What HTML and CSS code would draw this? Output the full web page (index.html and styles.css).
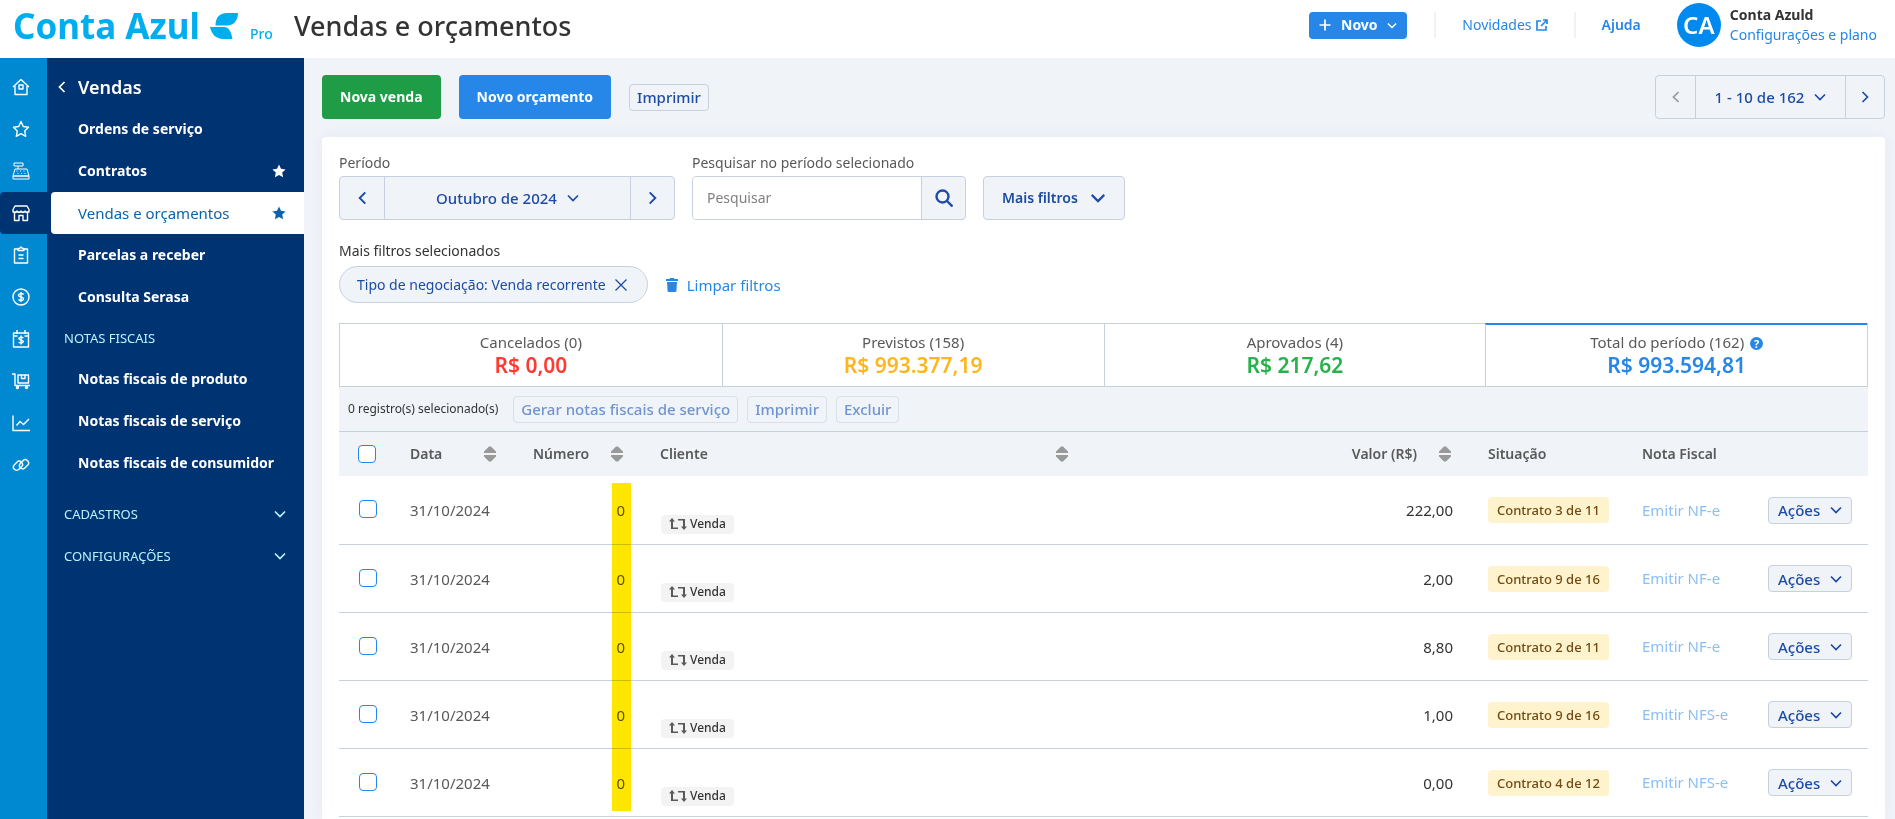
FILE: index.html
```html
<!DOCTYPE html>
<html lang="pt-BR">
<head>
  <meta charset="UTF-8" />
  <meta name="viewport" content="width=device-width, initial-scale=1.0"/>
  <title>Vendas e orçamentos | Conta Azul</title>
  <link rel="stylesheet" href="styles.css">
</head>
<body>

  <!-- Shared icons -->
  <svg class="sprite" aria-hidden="true">
    <symbol id="chevron-down" viewBox="0 0 12 8"><path d="M1 1.500l5 5 5-5"/></symbol>
    <symbol id="chevron-left" viewBox="0 0 8 12"><path d="M6.500 1l-5 5 5 5"/></symbol>
    <symbol id="chevron-right" viewBox="0 0 8 12"><path d="M1.500 1l5 5-5 5"/></symbol>
    <symbol id="sort" viewBox="0 0 12 16"><path d="M5 .5h2l5 5V7H0V5.500zM0 9h12v1.500l-5 5H5l-5-5z"/></symbol>
    <symbol id="star" viewBox="0 0 14 14"><path d="M7 .5l2 4.300 4.600.6-3.400 3.200.9 4.700L7 11l-4.100 2.300.9-4.700L.4 5.400 5 4.800z"/></symbol>
    <symbol id="repeat" viewBox="0 0 18 12"><path d="M3 0l3 3.500H4v6h5V11H2V3.500H0zM15 12l-3-3.500h2v-6H9V1h7v7.500h2z"/></symbol>
  </svg>

  <header class="header">
    <a href="#" class="logo">
      <span class="logo__name">Conta Azul</span>
      <svg class="logo__mark" viewBox="0 0 28 26"><path d="M5.500 12.500C5.500 5 9 0 17 0h11c0 7-4 12.500-11 12.500zM0 14h14c4 0 7 3 8.500 12H13C6 26 1.500 21 0 14z"/></svg>
      <span class="logo__plan">Pro</span>
    </a>
    <h1 class="header__title">Vendas e orçamentos</h1>
    <div class="header__actions">
      <button class="btn-new">
        <svg class="icon" width="12" height="12" viewBox="0 0 12 12"><path d="M6 .5v11M.5 6h11"/></svg>
        <span>Novo</span>
        <svg class="icon" width="10" height="7"><use href="#chevron-down"/></svg>
      </button>
      <a href="#" class="header__link">Novidades
        <svg class="icon" width="12" height="12" viewBox="0 0 12 12"><path d="M5 2H1v9h9V7M7 1h4v4M11 1L5 7"/></svg>
      </a>
      <a href="#" class="header__link header__link--help">Ajuda</a>
      <div class="account">
        <span class="account__avatar">CA</span>
        <div class="account__text">
          <strong>Conta Azuld</strong>
          <a href="#">Configurações e plano</a>
        </div>
      </div>
    </div>
  </header>

  <div class="layout">
    <nav class="rail" aria-label="Módulos">
      <a href="#" aria-label="Início"><svg viewBox="0 0 18 18"><path d="M1 9l8-7.500L17 9M3 8v8.500h12V8M7 7h4v4H7z"/></svg></a>
      <a href="#" aria-label="Favoritos"><svg viewBox="0 0 18 18"><path d="M9 1.500l2.300 5 5.200.7-3.800 3.700 1 5.400L9 13.700l-4.700 2.600 1-5.400L1.500 7.200l5.200-.7z"/></svg></a>
      <a href="#" aria-label="Caixa"><svg class="thin" viewBox="0 0 18 18"><path d="M2 1h9v3H2zM6 4v3M3 7h12l2 7H1zM1 14h16v3H1zM4.500 9h1M8 9h1M11.500 9h1M5.500 11.500h1M9 11.500h1M12.500 11.500h1"/></svg></a>
      <a href="#" class="active" aria-label="Vendas"><svg viewBox="0 0 18 18"><path d="M3 2h12l2 3.500V8H1V5.500zM1 7c1 2 3 2 4 0 1 2 3 2 4 0 1 2 3 2 4 0 1 2 3 2 4 0M2.500 9v7.500H7v-5h4v5h4.500V9"/></svg></a>
      <a href="#" aria-label="Cadastros"><svg viewBox="0 0 18 18"><path d="M6 3H2.500v14h13V3H12M6 4.500h6V2.500h-1.500L9 1 7.500 2.500H6zM6.500 9h5M6.500 12.500h5"/></svg></a>
      <a href="#" aria-label="Financeiro"><svg viewBox="0 0 18 18"><circle cx="9" cy="9" r="8"/><path d="M11.500 6.500c-1-1.500-5-1.200-5 .8 0 2.200 5 1.200 5 3.500 0 2-4 2.200-5 .5M9 4v10"/></svg></a>
      <a href="#" aria-label="Agenda"><svg viewBox="0 0 18 18"><path d="M1.500 3h15v14h-15zM1.500 6h4M12.500 6h4M5 0v4M13 0v4M11.300 8c-1-1.200-4.500-1-4.500.6 0 1.900 4.500 1 4.500 3 0 1.700-3.700 1.900-4.600.4M9 5.500v9"/></svg></a>
      <a href="#" aria-label="Estoque"><svg viewBox="0 0 18 18"><path d="M0 2h3v11.500h15M6 3h10.500v8H6zM9.500 3v3.500H13V3"/><circle cx="5.500" cy="15.500" r="1"/><circle cx="14.500" cy="15.500" r="1"/></svg></a>
      <a href="#" aria-label="Relatórios"><svg viewBox="0 0 18 18"><path d="M1 1.500v15h17M4.500 11.500L8 7.500l3.500 3L17 5"/></svg></a>
      <a href="#" aria-label="Integrações"><svg viewBox="0 0 18 18"><rect x="1" y="6.500" width="10" height="6.500" rx="3.200" transform="rotate(-45 6 9.800)"/><rect x="7" y="5" width="10" height="6.500" rx="3.200" transform="rotate(-45 12 8.200)"/></svg></a>
    </nav>

    <nav class="sidebar" aria-label="Vendas">
      <a href="#" class="sidebar__title"><svg class="icon" width="8" height="12"><use href="#chevron-left"/></svg>Vendas</a>
      <a href="#" class="sidebar__item">Ordens de serviço</a>
      <a href="#" class="sidebar__item">Contratos <svg class="star"><use href="#star"/></svg></a>
      <a href="#" class="sidebar__item sidebar__item--active">Vendas e orçamentos <svg class="star"><use href="#star"/></svg></a>
      <a href="#" class="sidebar__item">Parcelas a receber</a>
      <a href="#" class="sidebar__item">Consulta Serasa</a>
      <h2 class="sidebar__section">NOTAS FISCAIS</h2>
      <a href="#" class="sidebar__item">Notas fiscais de produto</a>
      <a href="#" class="sidebar__item">Notas fiscais de serviço</a>
      <a href="#" class="sidebar__item">Notas fiscais de consumidor</a>
      <div class="sidebar__groups">
        <button class="sidebar__section">CADASTROS <svg class="icon" width="12" height="8"><use href="#chevron-down"/></svg></button>
        <button class="sidebar__section">CONFIGURAÇÕES <svg class="icon" width="12" height="8"><use href="#chevron-down"/></svg></button>
      </div>
    </nav>

    <main class="main">
      <div class="toolbar">
        <button class="btn btn--green">Nova venda</button>
        <button class="btn btn--blue">Novo orçamento</button>
        <button class="btn-small">Imprimir</button>
        <div class="group pagination">
          <button disabled aria-label="Página anterior"><svg class="icon" width="8" height="12"><use href="#chevron-left"/></svg></button>
          <button class="group__label">1 - 10 de 162 <svg class="icon" width="12" height="8"><use href="#chevron-down"/></svg></button>
          <button aria-label="Próxima página"><svg class="icon" width="8" height="12"><use href="#chevron-right"/></svg></button>
        </div>
      </div>

      <section class="card">
        <div class="filters">
          <div class="field">
            <span class="field__label">Período</span>
            <div class="group period">
              <button aria-label="Mês anterior"><svg class="icon" width="9" height="14"><use href="#chevron-left"/></svg></button>
              <button class="group__label">Outubro de 2024 <svg class="icon" width="12" height="8"><use href="#chevron-down"/></svg></button>
              <button aria-label="Próximo mês"><svg class="icon" width="9" height="14"><use href="#chevron-right"/></svg></button>
            </div>
          </div>
          <div class="field">
            <label class="field__label" for="search">Pesquisar no período selecionado</label>
            <div class="group search">
              <input type="text" id="search" placeholder="Pesquisar">
              <button aria-label="Pesquisar"><svg class="icon icon--bold" width="18" height="18" viewBox="0 0 18 18"><circle cx="7.500" cy="7.500" r="6"/><path d="M12 12l5.500 5.500"/></svg></button>
            </div>
          </div>
          <button class="btn btn--light">Mais filtros <svg class="icon" width="16" height="10"><use href="#chevron-down"/></svg></button>
        </div>

        <p class="selected-label">Mais filtros selecionados</p>
        <div class="selected">
          <button class="chip">Tipo de negociação: Venda recorrente
            <svg class="icon" width="12" height="12" viewBox="0 0 12 12"><path d="M.5.5l11 11M11.500.5l-11 11"/></svg>
          </button>
          <a href="#" class="clear">
            <svg width="12" height="14" viewBox="0 0 12 14"><path d="M0 1h3.500L4.200 0h3.600l.7 1H12v2H0zM1 4h10l-.6 9a1 1 0 0 1-1 1H2.600a1 1 0 0 1-1-1z"/></svg>
            Limpar filtros
          </a>
        </div>

        <div class="totals">
          <button class="total total--red"><span>Cancelados (0)</span><strong>R$ 0,00</strong></button>
          <button class="total total--yellow"><span>Previstos (158)</span><strong>R$ 993.377,19</strong></button>
          <button class="total total--green"><span>Aprovados (4)</span><strong>R$ 217,62</strong></button>
          <button class="total total--blue active"><span>Total do período (162) <i class="help">?</i></span><strong>R$ 993.594,81</strong></button>
        </div>

        <div class="bulk">
          <span>0 registro(s) selecionado(s)</span>
          <button class="btn-small" disabled>Gerar notas fiscais de serviço</button>
          <button class="btn-small" disabled>Imprimir</button>
          <button class="btn-small" disabled>Excluir</button>
        </div>

        <div class="table-wrap">
          <table class="sales">
            <colgroup>
              <col class="col-check">
              <col class="col-date">
              <col class="col-number">
              <col>
              <col class="col-value">
              <col class="col-status">
              <col class="col-invoice">
              <col class="col-actions">
            </colgroup>
            <thead>
              <tr>
                <th><input type="checkbox" aria-label="Selecionar todos"></th>
                <th><div class="sortable">Data <svg><use href="#sort"/></svg></div></th>
                <th><div class="sortable">Número <svg><use href="#sort"/></svg></div></th>
                <th><div class="sortable">Cliente <svg><use href="#sort"/></svg></div></th>
                <th><div class="sortable sortable--end">Valor (R$) <svg><use href="#sort"/></svg></div></th>
                <th>Situação</th>
                <th>Nota Fiscal</th>
                <th></th>
              </tr>
            </thead>
            <tbody>
              <tr>
                <td class="check"><input type="checkbox" aria-label="Selecionar venda"></td>
                <td class="date">31/10/2024</td>
                <td class="number">0</td>
                <td class="client"><span class="tag"><svg><use href="#repeat"/></svg>Venda</span></td>
                <td class="value">222,00</td>
                <td><span class="status">Contrato 3 de 11</span></td>
                <td><a href="#" class="invoice">Emitir NF-e</a></td>
                <td><button class="btn-small actions">Ações <svg class="icon" width="12" height="8"><use href="#chevron-down"/></svg></button></td>
              </tr>
              <tr>
                <td class="check"><input type="checkbox" aria-label="Selecionar venda"></td>
                <td class="date">31/10/2024</td>
                <td class="number">0</td>
                <td class="client"><span class="tag"><svg><use href="#repeat"/></svg>Venda</span></td>
                <td class="value">2,00</td>
                <td><span class="status">Contrato 9 de 16</span></td>
                <td><a href="#" class="invoice">Emitir NF-e</a></td>
                <td><button class="btn-small actions">Ações <svg class="icon" width="12" height="8"><use href="#chevron-down"/></svg></button></td>
              </tr>
              <tr>
                <td class="check"><input type="checkbox" aria-label="Selecionar venda"></td>
                <td class="date">31/10/2024</td>
                <td class="number">0</td>
                <td class="client"><span class="tag"><svg><use href="#repeat"/></svg>Venda</span></td>
                <td class="value">8,80</td>
                <td><span class="status">Contrato 2 de 11</span></td>
                <td><a href="#" class="invoice">Emitir NF-e</a></td>
                <td><button class="btn-small actions">Ações <svg class="icon" width="12" height="8"><use href="#chevron-down"/></svg></button></td>
              </tr>
              <tr>
                <td class="check"><input type="checkbox" aria-label="Selecionar venda"></td>
                <td class="date">31/10/2024</td>
                <td class="number">0</td>
                <td class="client"><span class="tag"><svg><use href="#repeat"/></svg>Venda</span></td>
                <td class="value">1,00</td>
                <td><span class="status">Contrato 9 de 16</span></td>
                <td><a href="#" class="invoice">Emitir NFS-e</a></td>
                <td><button class="btn-small actions">Ações <svg class="icon" width="12" height="8"><use href="#chevron-down"/></svg></button></td>
              </tr>
              <tr>
                <td class="check"><input type="checkbox" aria-label="Selecionar venda"></td>
                <td class="date">31/10/2024</td>
                <td class="number">0</td>
                <td class="client"><span class="tag"><svg><use href="#repeat"/></svg>Venda</span></td>
                <td class="value">0,00</td>
                <td><span class="status">Contrato 4 de 12</span></td>
                <td><a href="#" class="invoice">Emitir NFS-e</a></td>
                <td><button class="btn-small actions">Ações <svg class="icon" width="12" height="8"><use href="#chevron-down"/></svg></button></td>
              </tr>
            </tbody>
          </table>
          <!-- Marker over the number column -->
          <div class="marker"></div>
        </div>
      </section>
    </main>
  </div>

</body>
</html>
```

FILE: styles.css
```css
:root {
  --cyan: #00aeef;
  --rail: #0089d1;
  --navy: #003372;
  --blue: #2687e9;
  --blue-dark: #1c4ca3;
  --green: #1e9c46;
  --bg: #f0f3f8;
  --border: #c7d1dd;
  --text: #333;
  --text-soft: #595959;
}

* {
  box-sizing: border-box;
}

body {
  font-family: "Noto Sans", "Open Sans", sans-serif;
  font-size: 14px;
  line-height: 20px;
  color: var(--text);
  background-color: var(--bg);
  margin: 0;
  min-height: 100vh;
  display: flex;
  flex-direction: column;
}

a {
  color: var(--blue);
  text-decoration: none;
}

button, input {
  font: inherit;
  margin: 0;
}

button {
  cursor: pointer;
  white-space: nowrap;
}

.sprite {
  position: absolute;
  width: 0;
  height: 0;
}

.icon {
  fill: none;
  stroke: currentColor;
  stroke-width: 1.7;
  flex: none;
}

.icon--bold {
  stroke-width: 2.4;
}

/* Header */
.header {
  display: flex;
  align-items: center;
  height: 58px;
  padding: 0 18px 6px 13px;
  background-color: #fff;
}

.logo {
  display: flex;
  align-items: center;
  width: 281px;
  color: var(--cyan);
}

.logo__name {
  font-size: 35px;
  font-weight: 700;
  line-height: 52px;
  white-space: nowrap;
}

.logo__mark {
  width: 28px;
  height: 26px;
  margin-left: 10px;
  fill: var(--cyan);
}

.logo__plan {
  margin: 15px 0 0 12px;
  font-weight: 500;
}

.header__title {
  margin: 0;
  font-size: 27px;
  font-weight: 500;
  line-height: 52px;
}

.header__actions {
  display: flex;
  align-items: center;
  align-self: flex-start;
  margin-left: auto;
  height: 50px;
}

.btn-new {
  display: flex;
  align-items: center;
  justify-content: space-between;
  width: 98px;
  height: 27px;
  margin-right: 27px;
  padding: 0 10px;
  border: none;
  border-radius: 4px;
  background-color: var(--blue);
  color: #fff;
  font-weight: 700;
}

.header__link {
  display: flex;
  align-items: center;
  gap: 4px;
  height: 26px;
  padding: 0 26px;
  border-left: 2px solid #eff2f7;
}

.header__link--help {
  padding-right: 36px;
  font-weight: 600;
}

.account {
  display: flex;
  align-items: center;
  gap: 9px;
}

.account__avatar {
  width: 44px;
  height: 44px;
  border-radius: 50%;
  background-color: #0089ef;
  color: #fff;
  font-size: 24px;
  font-weight: 600;
  line-height: 44px;
  text-align: center;
}

.account__text {
  display: flex;
  flex-direction: column;
}

/* Navigation */
.layout {
  display: flex;
  flex: 1;
}

.rail {
  width: 47px;
  flex: none;
  padding-top: 8px;
  background-color: var(--rail);
}

.rail a {
  display: flex;
  align-items: center;
  height: 42px;
  padding-left: 12px;
}

.rail .active {
  background-color: var(--navy);
  border-radius: 4px 0 0 4px;
}

.rail svg {
  width: 18px;
  height: 18px;
  fill: none;
  stroke: #fff;
  stroke-width: 1.4;
  stroke-linejoin: round;
}

.rail .thin {
  stroke-width: 1;
}

.sidebar {
  width: 257px;
  flex: none;
  padding: 8px 0 0 4px;
  background-color: var(--navy);
}

.sidebar__title,
.sidebar__item,
.sidebar__section {
  display: flex;
  align-items: center;
  height: 42px;
  color: #fff;
}

.sidebar__title {
  gap: 12px;
  padding-left: 7px;
  font-size: 18px;
  font-weight: 600;
}

.sidebar__item {
  justify-content: space-between;
  padding: 0 18px 0 27px;
  font-weight: 700;
}

.sidebar__item--active {
  border-radius: 4px 0 0 4px;
  background-color: #fff;
  color: #0b63ae;
  font-size: 15px;
  font-weight: 400;
}

.star {
  width: 14px;
  height: 14px;
  fill: currentColor;
}

.sidebar__section {
  justify-content: space-between;
  width: 100%;
  height: 40px;
  margin: 0;
  padding: 0 18px 0 13px;
  border: none;
  background: none;
  color: #b8f3ff;
  font-size: 13px;
  font-weight: 400;
}

.sidebar__groups {
  display: grid;
  gap: 2px;
  margin-top: 10px;
}

/* Buttons */
.main {
  display: flex;
  flex-direction: column;
  flex: 1;
  min-width: 0;
  padding: 17px 10px 0 18px;
}

.toolbar {
  display: flex;
  align-items: center;
  gap: 18px;
  margin-bottom: 18px;
}

.btn {
  display: flex;
  align-items: center;
  gap: 12px;
  height: 44px;
  padding: 0 18px;
  border: none;
  border-radius: 4px;
  color: #fff;
  font-weight: 700;
}

.btn--green {
  background-color: var(--green);
}

.btn--blue {
  background-color: var(--blue);
}

.btn--light {
  border: 1px solid var(--border);
  background-color: var(--bg);
  color: var(--blue-dark);
  font-weight: 600;
}

.btn-small {
  height: 27px;
  padding: 0 7px;
  border: 1px solid var(--border);
  border-radius: 4px;
  background-color: var(--bg);
  color: var(--blue-dark);
  font-size: 15px;
  font-weight: 500;
}

.btn-small:disabled {
  border-color: #dae0e8;
  color: #6f94cf;
}

.group {
  display: flex;
  height: 44px;
  border: 1px solid var(--border);
  border-radius: 4px;
  background-color: var(--bg);
  overflow: hidden;
}

.group button {
  display: flex;
  align-items: center;
  justify-content: center;
  width: 44px;
  padding: 0;
  border: none;
  border-left: 1px solid var(--border);
  background: none;
  color: var(--blue-dark);
}

.group > :first-child {
  border-left: none;
}

.group .group__label {
  flex: 1;
  gap: 10px;
  font-size: 15px;
  font-weight: 500;
}

.group button:disabled {
  color: #999;
}

.pagination {
  width: 230px;
  margin-left: auto;
}

.pagination button {
  width: 39px;
}

/* Card */
.card {
  flex: 1;
  padding: 16px 17px 0;
  border-radius: 4px 4px 0 0;
  background-color: #fff;
  box-shadow: 0 0 16px rgba(28, 76, 163, 0.05);
}

.filters {
  display: flex;
  align-items: flex-end;
  gap: 17px;
}

.field__label {
  display: block;
  margin-bottom: 3px;
  color: var(--text-soft);
}

.period {
  width: 336px;
}

.search {
  width: 274px;
}

.search input {
  flex: 1;
  min-width: 0;
  padding: 0 14px;
  border: none;
  background-color: #fff;
}

.search input::placeholder {
  color: #808080;
}

.selected-label {
  margin: 21px 0 5px;
}

.selected {
  display: flex;
  align-items: center;
  gap: 18px;
  margin-bottom: 20px;
}

.chip {
  display: flex;
  align-items: center;
  gap: 9px;
  height: 37px;
  padding: 0 20px 0 17px;
  border: 1px solid var(--border);
  border-radius: 19px;
  background-color: var(--bg);
  color: var(--blue-dark);
}

.chip .icon {
  stroke-width: 1.3;
}

.clear {
  display: flex;
  align-items: center;
  gap: 9px;
  font-size: 15px;
}

.clear svg {
  fill: var(--blue);
}

.totals {
  display: grid;
  grid-template-columns: repeat(4, 1fr);
  border: 1px solid var(--border);
  border-top: none;
}

.total {
  display: flex;
  flex-direction: column;
  align-items: center;
  height: 63px;
  padding: 8px 0 0;
  border: none;
  border-top: 1px solid var(--border);
  border-left: 1px solid var(--border);
  background: none;
  color: var(--text-soft);
  font-size: 15px;
}

.total:first-child {
  border-left: none;
}

.total.active {
  padding-top: 7px;
  border-top: 2px solid var(--blue);
}

.total strong {
  font-size: 21px;
  font-weight: 600;
  line-height: 26px;
}

.total--red strong {
  color: #ff3b30;
}

.total--yellow strong {
  color: #ffb61e;
}

.total--green strong {
  color: #25b249;
}

.total--blue strong {
  color: var(--blue);
}

.help {
  display: inline-block;
  width: 13px;
  height: 13px;
  margin-left: 2px;
  border-radius: 50%;
  background-color: var(--blue);
  color: #fff;
  font-size: 11px;
  font-style: normal;
  font-weight: 700;
  line-height: 13px;
}

.bulk {
  display: flex;
  align-items: center;
  gap: 9px;
  height: 45px;
  padding-left: 9px;
  border-bottom: 1px solid var(--border);
  background-color: var(--bg);
}

.bulk span {
  margin-right: 6px;
  font-size: 12px;
}

/* Table */
.table-wrap {
  position: relative;
}

.sales {
  width: 100%;
  border-collapse: collapse;
  table-layout: fixed;
}

.col-check {
  width: 71px;
}

.col-date {
  width: 123px;
}

.col-number {
  width: 127px;
}

.col-value {
  width: 383px;
}

.col-status {
  width: 154px;
}

.col-invoice {
  width: 126px;
}

.col-actions {
  width: 100px;
}

.sales th {
  height: 44px;
  padding: 0;
  background-color: var(--bg);
  color: var(--text-soft);
  font-weight: 600;
  text-align: left;
}

.sales td {
  height: 68px;
  padding: 1px 0 0;
  border-bottom: 1px solid var(--border);
}

.sales .check {
  padding: 0 0 1px 1px;
}

.sales input {
  display: block;
  appearance: none;
  width: 18px;
  height: 18px;
  margin-left: 19px;
  border: 1px solid var(--blue);
  border-radius: 4px;
  background-color: #fff;
}

.sortable {
  display: flex;
  align-items: center;
  justify-content: space-between;
  padding-right: 37px;
}

.sortable--end {
  justify-content: flex-end;
  gap: 22px;
}

.sortable svg {
  width: 12px;
  height: 16px;
  fill: #999;
}

.sales .date,
.sales .number {
  color: var(--text-soft);
}

.sales .date,
.sales .number,
.sales .value {
  font-size: 15px;
}

.sales .number,
.sales .value {
  padding-right: 35px;
  text-align: right;
}

.sales .client {
  padding: 0 0 10px 1px;
  vertical-align: bottom;
}

.tag {
  display: flex;
  align-items: center;
  gap: 3px;
  width: max-content;
  height: 19px;
  padding: 0 8px;
  border-radius: 4px;
  background-color: #f3f3f3;
  font-size: 12px;
  font-weight: 500;
}

.tag svg {
  width: 18px;
  height: 12px;
  fill: #595959;
}

.status {
  display: inline-block;
  padding: 3px 9px;
  border-radius: 4px;
  background-color: #fff3cd;
  color: #704a12;
  font-size: 13px;
  font-weight: 500;
}

.invoice {
  color: #8bc0f5;
  font-size: 15px;
}

.actions {
  display: flex;
  align-items: center;
  gap: 10px;
  padding: 0 9px;
}

.marker {
  position: absolute;
  top: 51px;
  left: 273px;
  width: 19px;
  bottom: 6px;
  background-color: #ffe600;
  mix-blend-mode: multiply;
}
```
